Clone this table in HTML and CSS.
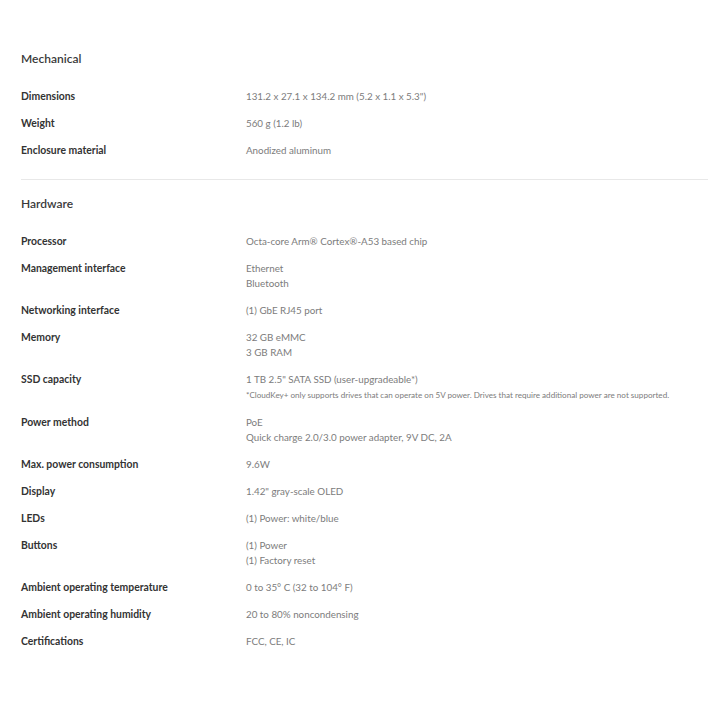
FILE: index.html
```html
<!DOCTYPE html>
<html lang="en">
<head>
  <meta charset="UTF-8" />
  <meta name="viewport" content="width=device-width, initial-scale=1.0"/>
  <title>Specifications</title>
  <link rel="stylesheet" href="styles.css">
</head>
<body>

  <!-- Mechanical -->
  <section class="spec-group">
    <h3>Mechanical</h3>
    <div class="spec-row">
      <div class="spec-label">Dimensions</div>
      <div class="spec-value">131.2 x 27.1 x 134.2 mm (5.2 x 1.1 x 5.3")</div>
    </div>
    <div class="spec-row">
      <div class="spec-label">Weight</div>
      <div class="spec-value">560 g (1.2 lb)</div>
    </div>
    <div class="spec-row">
      <div class="spec-label">Enclosure material</div>
      <div class="spec-value">Anodized aluminum</div>
    </div>
  </section>

  <!-- Hardware -->
  <section class="spec-group">
    <h3>Hardware</h3>
    <div class="spec-row">
      <div class="spec-label">Processor</div>
      <div class="spec-value">Octa-core Arm® Cortex®-A53 based chip</div>
    </div>
    <div class="spec-row">
      <div class="spec-label">Management interface</div>
      <div class="spec-value">Ethernet<br>Bluetooth</div>
    </div>
    <div class="spec-row">
      <div class="spec-label">Networking interface</div>
      <div class="spec-value">(1) GbE RJ45 port</div>
    </div>
    <div class="spec-row">
      <div class="spec-label">Memory</div>
      <div class="spec-value">32 GB eMMC<br>3 GB RAM</div>
    </div>
    <div class="spec-row">
      <div class="spec-label">SSD capacity</div>
      <div class="spec-value">1 TB 2.5" SATA SSD (user-upgradeable*)
        <p class="spec-note">*CloudKey+ only supports drives that can operate on 5V power. Drives that require additional power are not supported.</p>
      </div>
    </div>
    <div class="spec-row">
      <div class="spec-label">Power method</div>
      <div class="spec-value">PoE<br>Quick charge 2.0/3.0 power adapter, 9V DC, 2A</div>
    </div>
    <div class="spec-row">
      <div class="spec-label">Max. power consumption</div>
      <div class="spec-value">9.6W</div>
    </div>
    <div class="spec-row">
      <div class="spec-label">Display</div>
      <div class="spec-value">1.42" gray-scale OLED</div>
    </div>
    <div class="spec-row">
      <div class="spec-label">LEDs</div>
      <div class="spec-value">(1) Power: white/blue</div>
    </div>
    <div class="spec-row">
      <div class="spec-label">Buttons</div>
      <div class="spec-value">(1) Power<br>(1) Factory reset</div>
    </div>
    <div class="spec-row">
      <div class="spec-label">Ambient operating temperature</div>
      <div class="spec-value">0 to 35° C (32 to 104° F)</div>
    </div>
    <div class="spec-row">
      <div class="spec-label">Ambient operating humidity</div>
      <div class="spec-value">20 to 80% noncondensing</div>
    </div>
    <div class="spec-row">
      <div class="spec-label">Certifications</div>
      <div class="spec-value">FCC, CE, IC</div>
    </div>
  </section>

</body>
</html>
```

FILE: styles.css
```css
body {
  margin: 0;
  padding: 51px 0 0 21px;
  font-family: 'Lato', 'Open Sans', sans-serif;
  background: #ffffff;
  color: #333;
  font-size: 10px;
  line-height: 15px;
}

.spec-group {
  display: flex;
  flex-direction: column;
  gap: 12px;
  padding-bottom: 21px;
}

.spec-group + .spec-group {
  border-top: 1px solid #e8e8e8;
  padding-top: 16px;
}

h3 {
  margin: 0 0 11px;
  font-size: 12px;
  font-weight: 600;
  color: #3a3a3a;
}

.spec-row {
  display: grid;
  grid-template-columns: 225px 1fr;
}

.spec-label {
  font-size: 10.4px;
  font-weight: 700;
  color: #333;
}

.spec-value {
  font-size: 9.8px;
  color: #7c7c7c;
}

.spec-note {
  margin: 1px 0 0;
  font-size: 8.1px;
  color: #7c7c7c;
}
```
